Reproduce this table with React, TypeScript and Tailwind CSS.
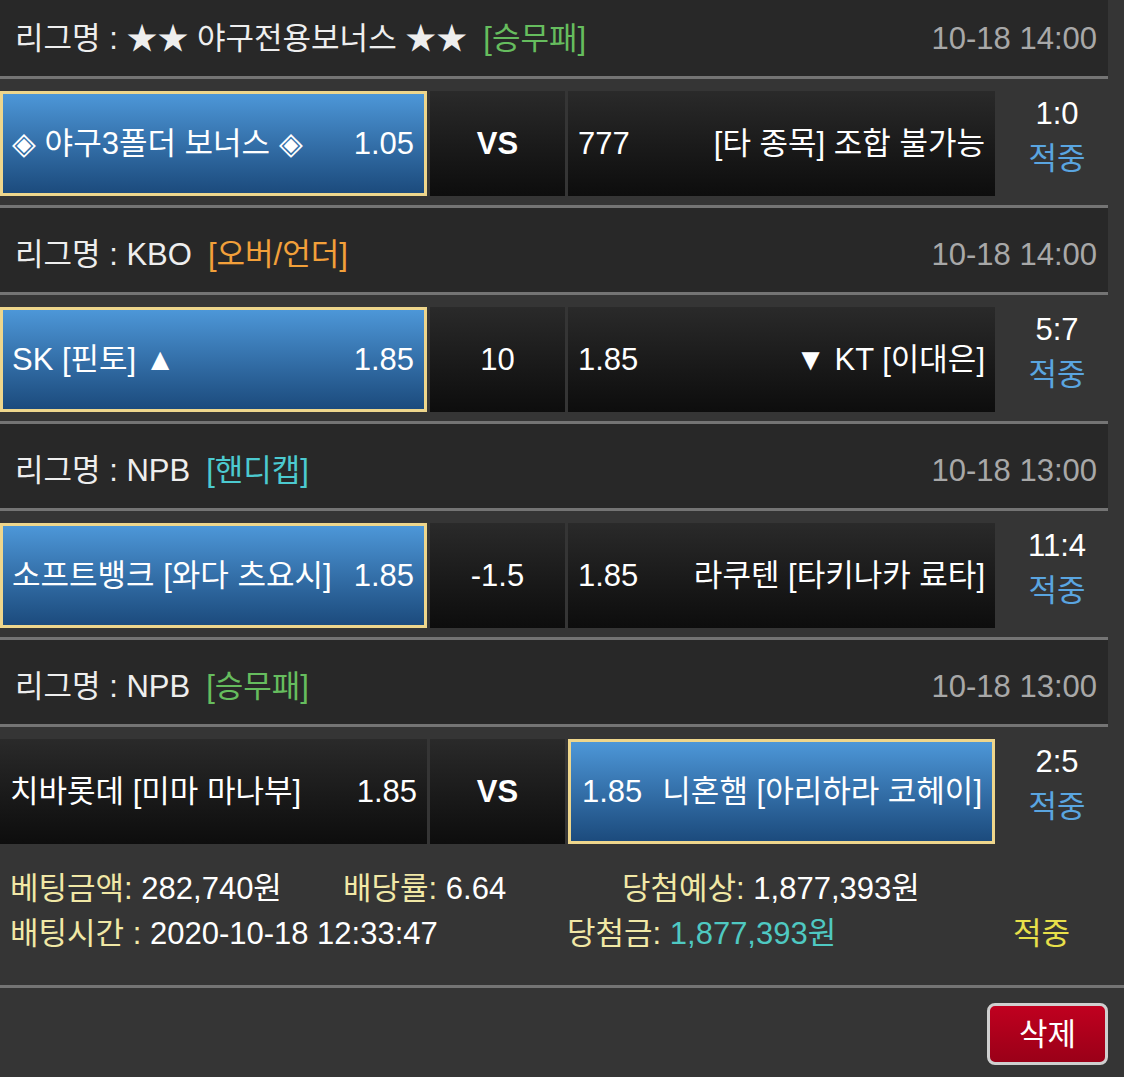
import React from "react";

const FONT = '"Liberation Sans", "Noto Sans CJK KR", sans-serif';

type Side = { name: string; odds: string; selected: boolean };
type Match = {
  league: string;
  tag: string;
  tagColor: string;
  time: string;
  home: Side;
  mid: string;
  midBold: boolean;
  away: Side;
  score: string;
};

const matches: Match[] = [
  {
    league: "리그명 : ★★ 야구전용보너스 ★★",
    tag: "[승무패]",
    tagColor: "text-[#66bd5e]",
    time: "10-18 14:00",
    home: { name: "◈ 야구3폴더 보너스 ◈", odds: "1.05", selected: true },
    mid: "VS",
    midBold: true,
    away: { name: "[타 종목] 조합 불가능", odds: "777", selected: false },
    score: "1:0",
  },
  {
    league: "리그명 : KBO",
    tag: "[오버/언더]",
    tagColor: "text-[#f3a03a]",
    time: "10-18 14:00",
    home: { name: "SK [핀토] ▲", odds: "1.85", selected: true },
    mid: "10",
    midBold: false,
    away: { name: "▼ KT [이대은]", odds: "1.85", selected: false },
    score: "5:7",
  },
  {
    league: "리그명 : NPB",
    tag: "[핸디캡]",
    tagColor: "text-[#4ccad0]",
    time: "10-18 13:00",
    home: { name: "소프트뱅크 [와다 츠요시]", odds: "1.85", selected: true },
    mid: "-1.5",
    midBold: false,
    away: { name: "라쿠텐 [타키나카 료타]", odds: "1.85", selected: false },
    score: "11:4",
  },
  {
    league: "리그명 : NPB",
    tag: "[승무패]",
    tagColor: "text-[#66bd5e]",
    time: "10-18 13:00",
    home: { name: "치바롯데 [미마 마나부]", odds: "1.85", selected: false },
    mid: "VS",
    midBold: true,
    away: { name: "니혼햄 [아리하라 코헤이]", odds: "1.85", selected: true },
    score: "2:5",
  },
];

function Line({ full }: { full?: boolean }) {
  return <div className={full ? "w-[1124px] h-[3px] bg-[#747474]" : "w-[1108px] h-[3px] bg-[#747474]"} />;
}

function Header({ m, first }: { m: Match; first: boolean }) {
  return (
    <div
      className={
        (first ? "h-[76px] " : "h-[84px] pt-[8px] ") +
        "w-[1108px] bg-[#282828] flex items-center justify-between pl-[15px] pr-[11px]"
      }
    >
      <div className="flex items-center text-[#eeeeee]">
        <span>{m.league}</span>
        <span className={"ml-[16px] " + m.tagColor}>{m.tag}</span>
      </div>
      <div className="text-[#a8a8a8]">{m.time}</div>
    </div>
  );
}

function HomeCell({ s }: { s: Side }) {
  if (s.selected) {
    return (
      <div className="w-[427px] h-[105px] shrink-0 border-[3px] border-[#eed68c] bg-gradient-to-b from-[#4d97d8] to-[#1c4b7d] flex items-center justify-between pl-[9px] pr-[10px] text-white">
        <span>{s.name}</span>
        <span>{s.odds}</span>
      </div>
    );
  }
  return (
    <div className="w-[427px] h-[105px] shrink-0 bg-gradient-to-b from-[#2a2a2a] to-[#0d0d0d] flex items-center justify-between pl-[10px] pr-[10px] text-white">
      <span>{s.name}</span>
      <span>{s.odds}</span>
    </div>
  );
}

function AwayCell({ s }: { s: Side }) {
  if (s.selected) {
    return (
      <div className="w-[427px] h-[105px] shrink-0 border-[3px] border-[#eed68c] bg-gradient-to-b from-[#4d97d8] to-[#1c4b7d] flex items-center pl-[11px] pr-[10px] text-white">
        <span>{s.odds}</span>
        <span className="ml-[20px]">{s.name}</span>
      </div>
    );
  }
  return (
    <div className="w-[427px] h-[105px] shrink-0 bg-gradient-to-b from-[#2a2a2a] to-[#0d0d0d] flex items-center justify-between pl-[10px] pr-[10px] text-white">
      <span>{s.odds}</span>
      <span>{s.name}</span>
    </div>
  );
}

function MatchRow({ m }: { m: Match }) {
  return (
    <div className="h-[126px] flex items-start pt-[12px]">
      <HomeCell s={m.home} />
      <div
        className={
          "ml-[3px] w-[135px] h-[105px] shrink-0 bg-gradient-to-b from-[#2a2a2a] to-[#0d0d0d] flex items-center justify-center text-white " +
          (m.midBold ? "font-bold" : "")
        }
      >
        {m.mid}
      </div>
      <div className="ml-[3px]">
        <AwayCell s={m.away} />
      </div>
      <div className="w-[124px] flex flex-col items-center leading-[45px]">
        <span className="text-white">{m.score}</span>
        <span className="text-[#5aa5e0]">적중</span>
      </div>
    </div>
  );
}

export default function App() {
  return (
    <div
      className="w-[1124px] h-[1077px] bg-[#353535] overflow-hidden text-[31px] leading-none"
      style={{ fontFamily: FONT }}
    >
      {matches.map((m, i) => (
        <div key={i}>
          <Header m={m} first={i === 0} />
          <Line />
          <MatchRow m={m} />
          {i < matches.length - 1 && <Line />}
        </div>
      ))}
      <div className="pt-[13px] pb-[29px] pl-[10px] leading-[45px]">
        <div className="flex">
          <span className="w-[333px]">
            <span className="text-[#f1e8a6]">베팅금액: </span>
            <span className="text-white">282,740원</span>
          </span>
          <span className="w-[279px]">
            <span className="text-[#f1e8a6]">배당률: </span>
            <span className="text-white">6.64</span>
          </span>
          <span>
            <span className="text-[#f1e8a6]">당첨예상: </span>
            <span className="text-white">1,877,393원</span>
          </span>
        </div>
        <div className="flex">
          <span className="w-[557px]">
            <span className="text-[#f1e8a6]">배팅시간 : </span>
            <span className="text-white">2020-10-18 12:33:47</span>
          </span>
          <span className="w-[446px]">
            <span className="text-[#f1e8a6]">당첨금: </span>
            <span className="text-[#4fc9c2]">1,877,393원</span>
          </span>
          <span className="text-[#e8e04a]">적중</span>
        </div>
      </div>
      <Line full />
      <div className="flex justify-end pr-[16px] pt-[15px]">
        <button className="w-[121px] h-[62px] rounded-[8px] border-[3px] border-[#cfcfcf] bg-gradient-to-b from-[#c0001f] to-[#9a0018] text-white flex items-center justify-center">
          삭제
        </button>
      </div>
    </div>
  );
}
